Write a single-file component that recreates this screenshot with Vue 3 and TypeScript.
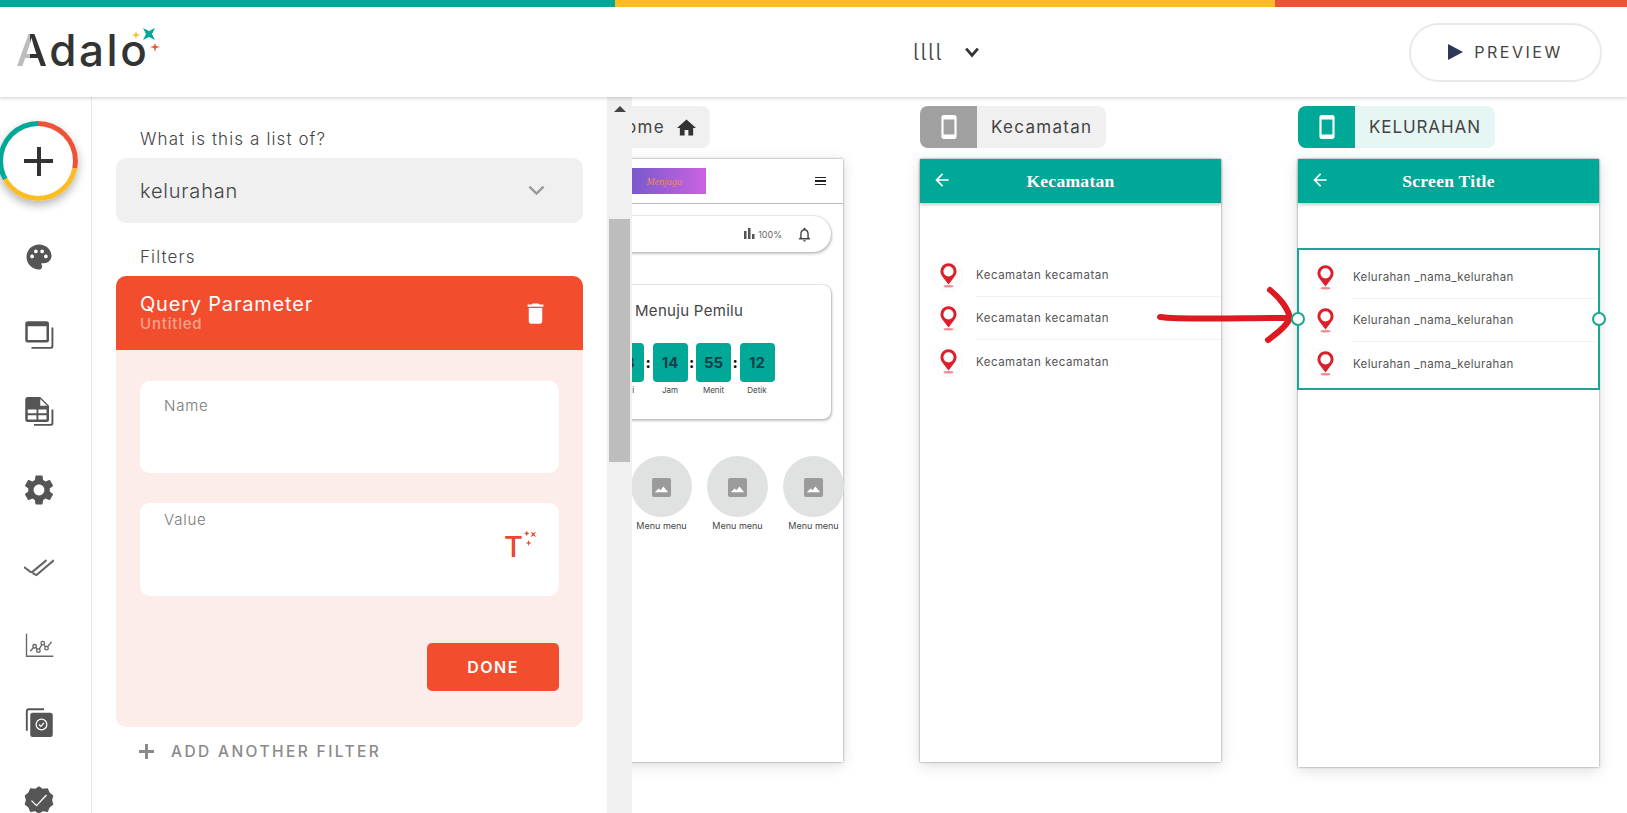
<template>
  <div class="page">
    <header class="topbar">
      <div class="strip">
        <span class="strip-teal"></span>
        <span class="strip-yellow"></span>
        <span class="strip-red"></span>
      </div>
      <div class="bar">
        <div class="logo">
          <span class="logo-a">A</span>dalo
          <svg class="logo-stars" viewBox="0 0 40 30">
            <path d="M4 7l1 3 3 1-3 1-1 3-1-3-3-1 3-1z" fill="#fbbd23" />
            <path d="M11 4l6 3 6-3-3 6 3 6-6-3-6 3 3-6z" fill="#00a898" />
            <path d="M23 19l1 3 4 1-4 1-1 4-1-4-4-1 4-1z" fill="#ef4c30" />
          </svg>
        </div>
        <div class="app-name">
          <span class="app-title">llll</span>
          <svg class="app-chevron" viewBox="0 0 24 24"><path d="M5 8l7 8 7-8" /></svg>
        </div>
        <button class="preview">
          <span class="play"></span>
          PREVIEW
        </button>
      </div>
    </header>

    <div class="body">
      <nav class="rail">
        <div class="add-ring">
          <div class="add-inner">
            <span class="add-h"></span>
            <span class="add-v"></span>
          </div>
        </div>
        <div class="rail-icons">
          <svg viewBox="0 0 24 24"><path d="M12 2C6.49 2 2 6.49 2 12s4.49 10 10 10c1.38 0 2.5-1.12 2.5-2.5 0-.61-.23-1.2-.64-1.67-.08-.1-.13-.21-.13-.33 0-.28.22-.5.5-.5H16c3.31 0 6-2.69 6-6 0-4.96-4.49-9-10-9zm-5.5 11c-.83 0-1.5-.67-1.5-1.5S5.67 10 6.5 10s1.5.67 1.5 1.5S7.33 13 6.5 13zm3-4C8.67 9 8 8.33 8 7.5S8.67 6 9.5 6s1.5.67 1.5 1.5S10.33 9 9.5 9zm5 0c-.83 0-1.5-.67-1.5-1.5S13.67 6 14.5 6s1.5.67 1.5 1.5S15.33 9 14.5 9zm3 4c-.83 0-1.5-.67-1.5-1.5s.67-1.5 1.5-1.5 1.5.67 1.5 1.5-.67 1.5-1.5 1.5z" /></svg>
          <svg viewBox="0 0 24 24">
            <path fill-rule="evenodd" d="M3 1h15a2 2 0 0 1 2 2v13a2 2 0 0 1-2 2H3a2 2 0 0 1-2-2V3a2 2 0 0 1 2-2zm0 4v11h15V5z" />
            <path d="M22 6h1.5v15a2 2 0 0 1-2 2H6v-1.5h15a1 1 0 0 0 1-1z" />
          </svg>
          <svg viewBox="0 0 24 24">
            <path fill-rule="evenodd" d="M3 0h10l7 7v11a2 2 0 0 1-2 2H3a2 2 0 0 1-2-2V2a2 2 0 0 1 2-2zm0 10v3h7v-3zm8.500 0v3H18v-3zM3 14.500V18h7v-3.500zm8.500 0V18H18v-3.500zM13 1.500V7h5.500z" />
            <path d="M22 10h1.500v11a2 2 0 0 1-2 2H8v-1.500h13a1 1 0 0 0 1-1z" />
          </svg>
          <svg viewBox="2 2 20 20"><path d="M19.14 12.94c.04-.3.06-.61.06-.94 0-.32-.02-.64-.07-.94l2.03-1.58c.18-.14.23-.41.12-.61l-1.92-3.32c-.12-.22-.37-.29-.59-.22l-2.39.96c-.5-.38-1.03-.7-1.62-.94l-.36-2.54c-.04-.24-.24-.41-.48-.41h-3.84c-.24 0-.43.17-.47.41l-.36 2.54c-.59.24-1.13.57-1.62.94l-2.39-.96c-.22-.08-.47 0-.59.22L2.74 8.87c-.12.21-.08.47.12.61l2.03 1.58c-.05.3-.09.63-.09.94s.02.64.07.94l-2.03 1.58c-.18.14-.23.41-.12.61l1.92 3.32c.12.22.37.29.59.22l2.39-.96c.5.38 1.03.7 1.62.94l.36 2.54c.05.24.24.41.48.41h3.84c.24 0 .44-.17.47-.41l.36-2.54c.59-.24 1.13-.56 1.62-.94l2.39.96c.22.08.47 0 .59-.22l1.92-3.32c.12-.22.07-.47-.12-.61l-2.01-1.58zM12 15.6c-1.98 0-3.6-1.62-3.6-3.6s1.62-3.6 3.6-3.6 3.6 1.62 3.6 3.6-1.62 3.6-3.6 3.6z" /></svg>
          <svg class="line" viewBox="0 0 24 24"><path d="M0 12l6 4.500M6 16.500L18 6.500M7 17l3 1.500L24 6.500" /></svg>
          <svg class="line thin" viewBox="0 0 24 24"><path d="M2 3v18h21.500M5 17l3.500-4 3 3.500 3.500-6 3 4 4-5" /><circle cx="8.500" cy="13" r="1.400" /><circle cx="11.500" cy="16.500" r="1.400" /><circle cx="15" cy="10.500" r="1.400" /><circle cx="18" cy="14.500" r="1.400" /></svg>
          <svg viewBox="0 0 24 24">
            <path d="M4 1h12v1.500H4a1 1 0 0 0-1 1V19H1.500V3.500A2.500 2.500 0 0 1 4 1z" />
            <rect x="5" y="4.500" width="18" height="19.500" rx="2" />
            <circle cx="14" cy="14" r="4.300" fill="none" stroke="#fff" stroke-width="1" />
            <path d="M12 14l1.500 1.500 2.500-2.800" fill="none" stroke="#fff" stroke-width="1" />
          </svg>
          <svg viewBox="0 0 24 24">
            <path d="M12 1l3 2 4-.5 1.500 3.500 3 2.500-1 3.500 1 3.500-3 2.500-1.500 3.500-4-.5-3 2-3-2-4 .5L3.500 18l-3-2.500 1-3.500-1-3.500 3-2.500L5 2.500 9 3z" />
            <path d="M6 12.500l4 4L18 8" fill="none" stroke="#fff" stroke-width="1.100" />
          </svg>
        </div>
      </nav>

      <aside class="panel">
        <div class="panel-content">
          <div class="field-label">What is this a list of?</div>
          <div class="select">
            <span>kelurahan</span>
            <svg viewBox="0 0 24 24"><path d="M3 7l9 9 9-9" /></svg>
          </div>
          <div class="field-label filters-label">Filters</div>

          <div class="filter-card">
            <div class="filter-head">
              <div>
                <div class="filter-name">Query Parameter</div>
                <div class="filter-sub">Untitled</div>
              </div>
              <svg class="trash" viewBox="0 0 24 24"><path d="M6 19c0 1.100.9 2 2 2h8c1.100 0 2-.9 2-2V7H6v12zM19 4h-3.500l-1-1h-5l-1 1H5v2h14V4z" /></svg>
            </div>
            <div class="filter-body">
              <div class="text-box">
                <span class="box-label">Name</span>
              </div>
              <div class="text-box value-box">
                <span class="box-label">Value</span>
                <div class="magic">
                  <span class="magic-t">T</span>
                  <svg viewBox="0 0 16 18">
                    <path d="M4 0l.8 2L7 3l-2.200.9L4 6l-.8-2.100L1 3l2.200-1z" />
                    <path d="M8 1l3 1.800L14 1l-1.800 3L14 7l-3-1.800L8 7l1.800-3z" />
                    <path d="M6 10l.8 2.400L9 13.200l-2.200.8L6 16.500 5.200 14 3 13.200l2.200-.8z" />
                  </svg>
                </div>
              </div>
              <div class="done-row">
                <button class="done">DONE</button>
              </div>
            </div>
          </div>

          <div class="add-filter">
            <span class="add-filter-plus"></span>
            ADD ANOTHER FILTER
          </div>
        </div>
        <div class="scrollbar">
          <span class="scroll-up"></span>
          <span class="scroll-thumb"></span>
        </div>
      </aside>

      <main class="canvas">
        <section class="screen home">
          <div class="chip plain">
            <span class="chip-text">Home</span>
            <svg class="home-icon" viewBox="2 3 20 17"><path d="M10 20v-6h4v6h5v-8h3L12 3 2 12h3v8z" /></svg>
          </div>
          <div class="phone">
            <div class="home-top">
              <div class="brand">
                <span>Menjaga</span>
              </div>
              <div class="burger"><i></i><i></i><i></i></div>
            </div>
            <div class="pill">
              <svg class="bars" viewBox="0 0 12 12"><rect x="0" y="3" width="2.500" height="8" /><rect x="4" y="0" width="2.500" height="11" /><rect x="8" y="6" width="2.500" height="5" /></svg>
              <span class="pill-pct">100%</span>
              <svg class="bell" viewBox="0 0 24 24"><path d="M12 22c1.100 0 2-.9 2-2h-4c0 1.100.89 2 2 2zm6-6v-5c0-3.070-1.640-5.640-4.500-6.320V4c0-.83-.67-1.500-1.500-1.500s-1.500.67-1.500 1.500v.68C7.630 5.360 6 7.920 6 11v5l-2 2v1h16v-1l-2-2zm-2 1H8v-6c0-2.480 1.510-4.500 4-4.500s4 2.020 4 4.500v6z" /></svg>
            </div>
            <div class="count-card">
              <div class="count-title">Menuju Pemilu</div>
              <div class="count-row">
                <template v-for="(c, i) in countdown" :key="c.label">
                  <span v-if="i > 0" class="colon">:</span>
                  <div class="count-cell">
                    <div class="count-box">{{ c.value }}</div>
                    <div class="count-label">{{ c.label }}</div>
                  </div>
                </template>
              </div>
            </div>
            <div class="menus">
              <div v-for="n in 4" :key="n" class="menu">
                <div class="menu-circle">
                  <svg viewBox="0 0 20 20">
                    <rect width="20" height="20" rx="2" fill="#9b9b9b" />
                    <path d="M3 15l4-4 2 2 3-4 5 6z" fill="#fff" />
                  </svg>
                </div>
                <div class="menu-label">Menu menu</div>
              </div>
            </div>
          </div>
        </section>

        <section class="screen kec">
          <div class="chip plain">
            <span class="chip-tab gray">
              <svg viewBox="0 0 24 24"><path d="M17 1.010 7 1c-1.100 0-2 .9-2 2v18c0 1.100.9 2 2 2h10c1.100 0 2-.9 2-2V3c0-1.100-.9-1.990-2-1.990zM17 19H7V5h10v14z" /></svg>
            </span>
            <span class="chip-text">Kecamatan</span>
          </div>
          <div class="phone">
            <div class="phone-head">
              <svg viewBox="0 0 24 24"><path d="M20 11H7.830l5.590-5.590L12 4l-8 8 8 8 1.410-1.410L7.830 13H20v-2z" /></svg>
              <span>Kecamatan</span>
            </div>
            <div class="rows kec-rows">
              <div v-for="n in 3" :key="n" class="row">
                <span class="pin">
                  <svg viewBox="0 0 20 30">
                    <path fill-rule="evenodd" d="M10 0a9.500 9.500 0 0 1 9.500 9.500c0 4-2.500 6.500-4.500 9L10 25l-5-6.500c-2-2.500-4.500-5-4.500-9A9.500 9.500 0 0 1 10 0zm0 3.500a6 6 0 1 0 0 12 6 6 0 0 0 0-12z" />
                    <ellipse cx="10" cy="27" rx="6" ry="1.500" opacity=".5" />
                  </svg>
                </span>
                <span class="row-text">Kecamatan kecamatan</span>
              </div>
            </div>
          </div>
        </section>

        <section class="screen kel">
          <div class="chip active">
            <span class="chip-tab teal">
              <svg viewBox="0 0 24 24"><path d="M17 1.010 7 1c-1.100 0-2 .9-2 2v18c0 1.100.9 2 2 2h10c1.100 0 2-.9 2-2V3c0-1.100-.9-1.990-2-1.990zM17 19H7V5h10v14z" /></svg>
            </span>
            <span class="chip-text">KELURAHAN</span>
          </div>
          <div class="phone tall">
            <div class="phone-head">
              <svg viewBox="0 0 24 24"><path d="M20 11H7.830l5.590-5.590L12 4l-8 8 8 8 1.410-1.410L7.830 13H20v-2z" /></svg>
              <span>Screen Title</span>
            </div>
            <div class="rows kel-rows">
              <span class="handle left"></span>
              <span class="handle right"></span>
              <div v-for="n in 3" :key="n" class="row">
                <span class="pin">
                  <svg viewBox="0 0 20 30">
                    <path fill-rule="evenodd" d="M10 0a9.500 9.500 0 0 1 9.500 9.500c0 4-2.500 6.500-4.500 9L10 25l-5-6.500c-2-2.500-4.500-5-4.500-9A9.500 9.500 0 0 1 10 0zm0 3.500a6 6 0 1 0 0 12 6 6 0 0 0 0-12z" />
                    <ellipse cx="10" cy="27" rx="6" ry="1.500" opacity=".5" />
                  </svg>
                </span>
                <span class="row-text">Kelurahan _nama_kelurahan</span>
              </div>
            </div>
          </div>
        </section>

        <svg class="scribble" viewBox="0 0 150 70">
          <path d="M4 36c20 3 80 1 130 1" />
          <path d="M114 9c9 7 18 18 20 28-3 8-14 16-22 22" />
        </svg>
      </main>
    </div>
  </div>
</template>

<script setup lang="ts">
interface CountCell {
  value: string
  label: string
}

const countdown: CountCell[] = [
  { value: '13', label: 'Hari' },
  { value: '14', label: 'Jam' },
  { value: '55', label: 'Menit' },
  { value: '12', label: 'Detik' },
]
</script>

<style>
html,
body {
  margin: 0;
  height: 100%;
  overflow: hidden;
  background: #fff;
}
</style>

<style scoped>
.page {
  display: flex;
  flex-direction: column;
  height: 813px;
  overflow: hidden;
  font-family: Inter, 'Open Sans', sans-serif;
  color: #444;
}

.topbar {
  position: relative;
  z-index: 5;
  background: #fff;
  box-shadow: 0 1px 4px rgba(0, 0, 0, 0.2);
}

.strip {
  display: flex;
  height: 7px;
}

.strip-teal {
  width: 615px;
  background: #00a898;
}

.strip-yellow {
  width: 660px;
  background: #fbbd23;
}

.strip-red {
  flex: 1;
  background: #ef5337;
}

.bar {
  display: flex;
  align-items: center;
  height: 90px;
  padding: 0 25px 0 16px;
}

.logo {
  position: relative;
  width: 131px;
  margin-top: -4px;
  font-size: 44px;
  font-weight: 500;
  letter-spacing: 2.5px;
  color: #333;
  line-height: 1;
}

.logo-a {
  background: linear-gradient(90deg, #bdbdbd 42%, #333 42%);
  -webkit-background-clip: text;
  background-clip: text;
  color: transparent;
}

.logo-stars {
  position: absolute;
  left: 116px;
  top: -4px;
  width: 40px;
  height: 30px;
}

.app-name {
  display: flex;
  align-items: center;
  gap: 21px;
  margin-left: 766px;
  margin-top: -1px;
}

.app-title {
  font-size: 23px;
  font-weight: 300;
  font-feature-settings: 'cv05';
  letter-spacing: 1.5px;
  width: 28px;
  color: #444;
}

.app-chevron {
  width: 20px;
  height: 20px;
  fill: none;
  stroke: #333;
  stroke-width: 3.4;
}

.preview {
  display: flex;
  align-items: center;
  justify-content: center;
  gap: 11px;
  width: 193px;
  height: 59px;
  margin-left: auto;
  margin-top: 0;
  background: #fff;
  border: 2px solid #e9e9e9;
  border-radius: 30px;
  font-family: inherit;
  font-size: 16px;
  letter-spacing: 2.500px;
  color: #444;
}

.play {
  width: 0;
  height: 0;
  border-left: 15px solid #2c3855;
  border-top: 8.500px solid transparent;
  border-bottom: 8.500px solid transparent;
}

.body {
  display: flex;
  flex: 1;
  min-height: 0;
}

.rail {
  position: relative;
  z-index: 3;
  flex: none;
  width: 91px;
  background: #fff;
  border-right: 1px solid #e8e8e8;
  box-sizing: content-box;
}

.add-ring {
  display: flex;
  align-items: center;
  justify-content: center;
  width: 80px;
  height: 80px;
  margin: 24px 0 0 -2px;
  border-radius: 50%;
  background: conic-gradient(#ef5337 0 28%, #fbbd23 28% 67%, #00a898 67% 100%);
  box-shadow: 0 4px 10px rgba(0, 0, 0, 0.3);
}

.add-inner {
  position: relative;
  width: 70px;
  height: 70px;
  border-radius: 50%;
  background: #fff;
}

.add-h {
  position: absolute;
  left: 21px;
  top: 33px;
  width: 29px;
  height: 4px;
  background: #333;
}

.add-v {
  position: absolute;
  left: 33.500px;
  top: 21px;
  width: 4px;
  height: 29px;
  background: #333;
}

.rail-icons {
  display: flex;
  flex-direction: column;
  align-items: center;
  gap: 47.500px;
  margin-top: 41px;
  width: 77px;
}

.rail-icons svg {
  flex: none;
  width: 30px;
  height: 30px;
  fill: #555;
}

.rail-icons svg.line {
  fill: none;
  stroke: #666;
  stroke-width: 1.600;
}

.rail-icons svg.thin {
  stroke-width: 1.100;
}

.rail-icons svg.thin circle {
  fill: #fff;
}

.panel {
  position: relative;
  z-index: 2;
  flex: none;
  display: flex;
  width: 540px;
  background: #fff;
}

.panel-content {
  flex: 1;
  padding: 0 24px;
  letter-spacing: 0.8px;
}

.field-label {
  margin: 32px 0 0 24px;
  height: 21px;
  line-height: 21px;
  font-size: 17px;
  font-weight: 300;
  letter-spacing: 1.100px;
  color: #444;
}

.select {
  display: flex;
  align-items: center;
  justify-content: space-between;
  height: 65px;
  margin-top: 8px;
  padding: 0 37px 0 24px;
  border-radius: 10px;
  background: #f0f0f0;
  font-size: 20px;
  font-weight: 300;
  color: #444;
}

.select svg {
  width: 19px;
  height: 19px;
  fill: none;
  stroke: #999;
  stroke-width: 3;
}

.filters-label {
  margin-top: 24px;
}

.filter-card {
  margin-top: 8px;
  border-radius: 10px;
  overflow: hidden;
  background: #fcecea;
}

.filter-head {
  display: flex;
  align-items: center;
  justify-content: space-between;
  height: 74px;
  padding: 0 34px 0 24px;
  background: #f24e2e;
  color: #fff;
}

.filter-name {
  font-size: 20px;
  line-height: 22px;
}

.filter-sub {
  font-size: 15px;
  line-height: 18px;
  font-weight: 500;
  color: #f9a28c;
}

.trash {
  width: 27px;
  height: 27px;
  fill: #fff;
}

.filter-body {
  padding: 31px 24px 36px;
}

.text-box {
  position: relative;
  height: 92px;
  margin-bottom: 30px;
  border-radius: 10px;
  background: #fff;
}

.value-box {
  height: 93px;
}

.box-label {
  position: absolute;
  left: 24px;
  top: 15px;
  font-size: 15px;
  font-weight: 300;
  color: #777;
}

.value-box .box-label {
  top: 7px;
}

.magic {
  position: absolute;
  right: 21px;
  top: 27px;
  display: flex;
}

.magic-t {
  font-size: 29px;
  line-height: 34px;
  font-weight: 500;
  letter-spacing: 0;
  color: #ea4630;
}

.magic svg {
  width: 15px;
  height: 18px;
  fill: #ea4630;
}

.done-row {
  display: flex;
  justify-content: flex-end;
  margin-top: 47px;
}

.done {
  width: 132px;
  height: 48px;
  border: 0;
  border-radius: 5px;
  background: #f24e2e;
  color: #fff;
  font-family: inherit;
  font-size: 16px;
  font-weight: 600;
  letter-spacing: 1.500px;
}

.add-filter {
  display: flex;
  align-items: center;
  gap: 17px;
  margin: 13px 0 0 23px;
  height: 22px;
  font-size: 15.500px;
  font-weight: 500;
  letter-spacing: 2.400px;
  color: #8a8a8a;
}

.add-filter-plus {
  position: relative;
  width: 15px;
  height: 15px;
  background:
    linear-gradient(#8a8a8a, #8a8a8a) center / 15px 3px no-repeat,
    linear-gradient(#8a8a8a, #8a8a8a) center / 3px 15px no-repeat;
}

.scrollbar {
  flex: none;
  width: 25px;
  display: flex;
  flex-direction: column;
  align-items: center;
  background: #f0f0f0;
}

.scroll-up {
  width: 0;
  height: 0;
  margin-top: 9px;
  border-left: 6px solid transparent;
  border-right: 6px solid transparent;
  border-bottom: 6px solid #444;
}

.scroll-thumb {
  width: 21px;
  height: 243px;
  margin-top: 107px;
  background: #bdbdbd;
}

.canvas {
  position: relative;
  flex: 1;
  overflow: hidden;
  background: #fff;
}

.screen {
  position: absolute;
  top: 9px;
  display: flex;
  flex-direction: column;
  gap: 11px;
  width: 301px;
}

.home {
  left: -90px;
}

.kec {
  left: 288px;
}

.kel {
  left: 666px;
}

.chip {
  display: flex;
  align-items: center;
  align-self: flex-start;
  height: 42px;
  border-radius: 8px;
  overflow: hidden;
  font-size: 17px;
  letter-spacing: 1.300px;
  color: #444;
}

.chip.plain {
  background: #f0f0f0;
}

.chip.active {
  background: #e6f6f4;
  letter-spacing: 0.900px;
}

.home .chip {
  align-self: flex-end;
  margin-right: 133px;
  padding: 0 14px 0 20px;
  gap: 12px;
}

.home-icon {
  width: 19px;
  height: 17px;
  fill: #333;
}

.chip-tab {
  display: flex;
  align-items: center;
  justify-content: center;
  width: 57px;
  height: 42px;
  margin-right: 14px;
}

.chip-tab svg {
  width: 26px;
  height: 26px;
  fill: #fff;
}

.chip-tab.gray {
  background: #a0a0a0;
}

.chip-tab.teal {
  background: #00a898;
}

.kec .chip {
  padding-right: 14px;
}

.kel .chip {
  padding-right: 14px;
}

.phone {
  height: 603px;
  background: #fff;
  box-shadow: 0 0 2px rgba(0, 0, 0, 0.45), 0 3px 14px rgba(0, 0, 0, 0.14);
}

.phone.tall {
  height: 608px;
}

.phone-head {
  position: relative;
  display: flex;
  align-items: center;
  justify-content: center;
  height: 44px;
  background: #00a898;
  box-shadow: 0 2px 3px rgba(0, 0, 0, 0.2);
  color: #fff;
  font-family: 'Liberation Serif', serif;
  font-size: 17.500px;
  font-weight: 700;
  letter-spacing: 0.3px;
}

.phone-head svg {
  position: absolute;
  left: 12px;
  top: 11px;
  width: 20px;
  height: 20px;
  fill: #fff;
}

.rows {
  display: flex;
  flex-direction: column;
  position: relative;
}

.kec-rows {
  margin-top: 51px;
}

.kel-rows {
  margin-top: 45px;
  height: 142px;
  box-sizing: border-box;
  padding-top: 6px;
  border: 2px solid #1aa594;
  margin-left: -1px;
  margin-right: -1px;
}

.row {
  display: flex;
  align-items: center;
  height: 43px;
  flex: none;
}

.pin {
  display: flex;
  align-items: center;
  justify-content: center;
  flex: none;
  width: 30px;
  height: 30px;
  margin: 0 13px 0 13px;
  border-radius: 50%;
  border: 1px solid #f7f7f7;
  box-sizing: border-box;
}

.kel-rows .pin {
  margin-left: 11px;
}

.pin svg {
  width: 17px;
  height: 26px;
  fill: #dc1f2a;
}

.row-text {
  flex: 1;
  align-self: stretch;
  display: flex;
  align-items: center;
  border-bottom: 1px solid #f0f0f0;
  font-size: 11.500px;
  font-weight: 400;
  letter-spacing: 0.5px;
  color: #555;
}

.row:last-child .row-text {
  border-bottom: 0;
}

.kel-rows .row-text {
  margin-right: 3px;
  letter-spacing: 0.350px;
}

.handle {
  position: absolute;
  top: 62px;
  width: 10px;
  height: 10px;
  border-radius: 50%;
  border: 2px solid #1aa594;
  background: #fff;
  z-index: 1;
}

.handle.left {
  left: -8px;
}

.handle.right {
  right: -8px;
}

.home-top {
  display: flex;
  align-items: center;
  justify-content: flex-end;
  height: 44px;
  border-bottom: 1px solid #bbb;
  padding-right: 17px;
}

.brand {
  display: flex;
  align-items: center;
  justify-content: flex-end;
  width: 96px;
  height: 26px;
  margin-right: 109px;
  padding-right: 24px;
  box-sizing: border-box;
  background: linear-gradient(90deg, #5f57c9, #cb62e0);
  color: #f08a5a;
  font-family: 'Liberation Serif', serif;
  font-style: italic;
  font-size: 10px;
}

.burger {
  display: flex;
  flex-direction: column;
  gap: 2.500px;
  width: 11px;
}

.burger i {
  height: 1.200px;
  background: #222;
}

.pill {
  display: flex;
  align-items: center;
  justify-content: flex-end;
  height: 36px;
  margin: 12px 12px 0;
  padding-right: 18px;
  border-radius: 18px;
  box-shadow: 0 0 2px rgba(0, 0, 0, 0.3), 1px 2px 3px rgba(0, 0, 0, 0.2);
}

.bars {
  width: 12px;
  height: 12px;
  fill: #555;
}

.pill-pct {
  margin: 0 14px 0 2px;
  font-size: 9px;
  color: #666;
}

.bell {
  width: 17px;
  height: 17px;
  fill: #444;
}

.count-card {
  height: 134px;
  margin: 33px 12px 0;
  border-radius: 8px;
  box-shadow: 0 0 2px rgba(0, 0, 0, 0.35), 1px 2px 3px rgba(0, 0, 0, 0.2);
  overflow: hidden;
}

.count-title {
  margin: 16px 0 0 81px;
  font-size: 15px;
  font-weight: 400;
  letter-spacing: 0.3px;
  color: #444;
}

.count-row {
  display: flex;
  margin: 23px 0 0 55px;
}

.count-cell {
  width: 35px;
}

.count-box {
  display: flex;
  align-items: center;
  justify-content: center;
  height: 39px;
  border-radius: 4px;
  background: #00a898;
  color: #17404a;
  font-size: 15px;
  font-weight: 700;
}

.count-label {
  margin-top: 3px;
  text-align: center;
  font-size: 8px;
  color: #444;
}

.colon {
  width: 8.500px;
  height: 39px;
  line-height: 39px;
  text-align: center;
  font-size: 15px;
  font-weight: 800;
  color: #111;
}

.menus {
  display: flex;
  gap: 15px;
  margin: 37px 0 0 13px;
}

.menu {
  flex: none;
  width: 61px;
}

.menu-circle {
  display: flex;
  align-items: center;
  justify-content: center;
  height: 61px;
  border-radius: 50%;
  background: #e0e1e1;
}

.menu-circle svg {
  width: 19px;
  height: 19px;
  margin-top: 1px;
}

.menu-label {
  margin-top: 3px;
  text-align: center;
  font-size: 9px;
  color: #444;
  white-space: nowrap;
}

.scribble {
  position: absolute;
  left: 524px;
  top: 184px;
  width: 150px;
  height: 70px;
  fill: none;
  stroke: #dd1a22;
  stroke-width: 6;
  stroke-linecap: round;
  stroke-linejoin: round;
}
</style>
